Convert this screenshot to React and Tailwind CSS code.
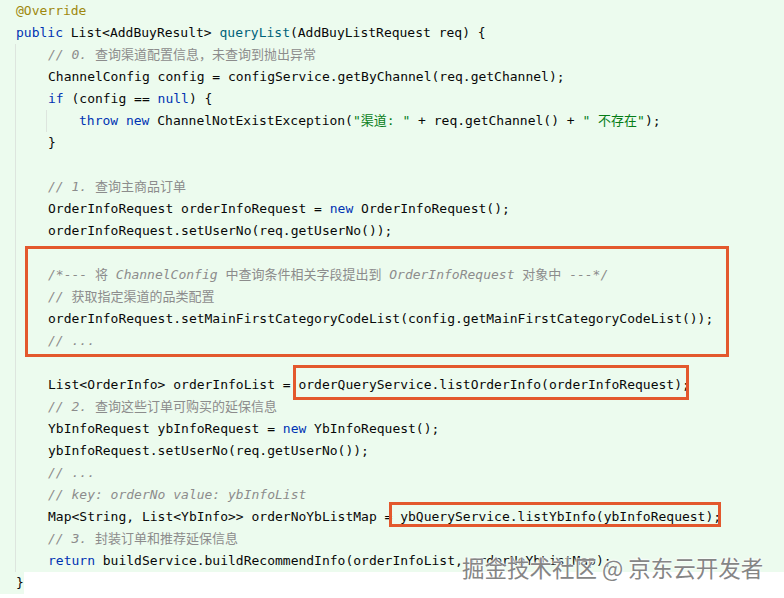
const colors = {
  t: 'text-[#080808]',
  k: 'text-[#0033b3]',
  a: 'text-[#9e880d]',
  f: 'text-[#00627a]',
  s: 'text-[#067d17]',
  c: 'text-[#8c8c8c] italic',
};

// each line: [indent, [[type, text], ...]]
const top = [
  [0, [['a', '@Override']]],
  [0, [['k', 'public'], ['t', ' List<AddBuyResult> '], ['f', 'queryList'], ['t', '(AddBuyListRequest req) {']]],
];

const body = [
  [['c', '// 0. '], ['z', '查询渠道配置信息，未查询到抛出异常']],
  [['t', 'ChannelConfig config = configService.getByChannel(req.getChannel);']],
  [['k', 'if'], ['t', ' (config == '], ['k', 'null'], ['t', ') {']],
  'IF',
  [['t', '}']],
  [],
  [['c', '// 1. '], ['z', '查询主商品订单']],
  [['t', 'OrderInfoRequest orderInfoRequest = '], ['k', 'new'], ['t', ' OrderInfoRequest();']],
  [['t', 'orderInfoRequest.setUserNo(req.getUserNo());']],
  [],
  [['c', '/*--- '], ['z', '将'], ['c', ' ChannelConfig '], ['z', '中查询条件相关字段提出到'], ['c', ' OrderInfoRequest '], ['z', '对象中'], ['c', ' ---*/']],
  [['c', '// '], ['z', '获取指定渠道的品类配置']],
  [['t', 'orderInfoRequest.setMainFirstCategoryCodeList(config.getMainFirstCategoryCodeList());']],
  [['c', '// ...']],
  [],
  [['t', 'List<OrderInfo> orderInfoList = orderQueryService.listOrderInfo(orderInfoRequest);']],
  [['c', '// 2. '], ['z', '查询这些订单可购买的延保信息']],
  [['t', 'YbInfoRequest ybInfoRequest = '], ['k', 'new'], ['t', ' YbInfoRequest();']],
  [['t', 'ybInfoRequest.setUserNo(req.getUserNo());']],
  [['c', '// ...']],
  [['c', '// key: orderNo value: ybInfoList']],
  [['t', 'Map<String, List<YbInfo>> orderNoYbListMap = ybQueryService.listYbInfo(ybInfoRequest);']],
  [['c', '// 3. '], ['z', '封装订单和推荐延保信息']],
  [['k', 'return'], ['t', ' buildService.buildRecommendInfo(orderInfoList, orderNoYbListMap);']],
];

function Segs({ segs }) {
  return segs.map(([type, text], i) =>
    type === 'z' ? (
      <span key={i} className="text-[#8c8c8c] not-italic">{text}</span>
    ) : (
      <span key={i} className={colors[type]}>{text}</span>
    )
  );
}

function Line({ segs, className = '' }) {
  return (
    <div className={`h-[22px] whitespace-pre ${className}`}>
      {segs.length ? <Segs segs={segs} /> : ' '}
    </div>
  );
}

export default function App() {
  return (
    <div
      className="relative w-[784px] h-[598px] overflow-hidden bg-[#ecfbee] text-[13px] leading-[22px] text-[#080808]"
      style={{ fontFamily: '"DejaVu Sans Mono", "Noto Sans CJK SC", monospace' }}
    >
      {top.map(([, segs], i) => (
        <Line key={i} segs={segs} className="pl-[16px]" />
      ))}

      {/* method body with indent guide */}
      <div className="ml-[15px] border-l border-[#dde5de] pl-[32px]">
        {body.map((segs, i) =>
          segs === 'IF' ? (
            <div key={i} className="-ml-[2px] border-l border-[#dde5de] pl-[32px]">
              <Line
                segs={[['k', 'throw'], ['t', ' '], ['k', 'new'], ['t', ' ChannelNotExistException('], ['s', '"渠道: "'], ['t', ' + req.getChannel() + '], ['s', '" 不存在"'], ['t', ');']]}
              />
            </div>
          ) : (
            <Line key={i} segs={segs} />
          )
        )}
      </div>

      <div className="flex h-[22px]">
        <div className="w-[24px] pl-[16px]">{'}'}</div>
        <div className="flex-1 bg-white" />
      </div>
      <div className="h-[4px] bg-white" />

      {/* annotation boxes */}
      <div className="absolute left-[25px] top-[246px] w-[704px] h-[111px] border-[3px] border-[#e3582d]" />
      <div className="absolute left-[293px] top-[365px] w-[396px] h-[35px] border-[3px] border-[#e3582d]" />
      <div className="absolute left-[389px] top-[502px] w-[332px] h-[25px] border-[3px] border-[#e3582d]" />

      {/* watermark */}
      <div
        className="absolute left-[462px] top-[552px] text-[22.5px] leading-[30px] text-[#858585] whitespace-nowrap [text-shadow:0_0_2px_#fff,0_0_2px_#fff,0_0_3px_#fff]"
        style={{ fontFamily: '"Noto Sans CJK SC", "Noto Sans", sans-serif' }}
      >
        掘金技术社区 @ 京东云开发者
      </div>
    </div>
  );
}
